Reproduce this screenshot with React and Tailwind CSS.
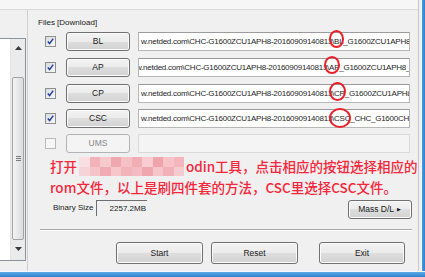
import React from 'react';

const ui = "font-['Liberation_Sans',Arial,sans-serif]";

const files = [
  {
    label: 'BL',
    mt: 'mt-0',
    pre: 'w.netded.com\\CHC-G1600ZCU1APH8-20160909140813',
    mark: '\\BL',
    post: '_G1600ZCU1APH8-20160909',
    ring: 'top-[calc(50%-12px)] h-[18px]',
    focused: true,
  },
  {
    label: 'AP',
    mt: 'mt-[7px]',
    pre: 'w.netded.com\\CHC-G1600ZCU1APH8-20160909140813',
    mark: '\\AP',
    post: '_G1600ZCU1APH8_2016090',
    ring: 'top-[calc(50%-12px)] h-[18px]',
    shift: true,
  },
  {
    label: 'CP',
    mt: 'mt-[7px]',
    pre: 'w.netded.com\\CHC-G1600ZCU1APH8-20160909140813',
    mark: '\\CP',
    post: '_G1600ZCU1APH8-2016090',
    ring: 'top-[calc(50%-12px)] h-[19px]',
  },
  {
    label: 'CSC',
    mt: 'mt-[6px]',
    pre: 'w.netded.com\\CHC-G1600ZCU1APH8-20160909140813',
    mark: '\\CSC',
    post: '_CHC_G1600CHC-2016090',
    ring: 'top-[calc(50%-11px)] h-[20px]',
  },
];

// pixelated blur over part of the annotation
const mosaic = [
  '#f8dfe1', '#f3b2b9', '#f6c9cd', '#f0a8b0', '#f5c0c6', '#f2aeb5', '#f7cdd1', '#efa3ab', '#f5c3c8', '#f3b6bc',
  '#f6d3d6', '#f5c4c9', '#f1abb2', '#f6c6cb', '#f3b3ba', '#f4bcc2', '#f0a6ae', '#f5c5ca', '#f2b1b8', '#f6cbcf',
];

const btn =
  'flex items-center justify-center rounded-[3px] border border-[#707070] bg-[linear-gradient(#f3f3f3,#ebebeb_50%,#dedede_50%,#d2d2d2)] shadow-[inset_0_0_0_1px_#fbfbfb] text-[8.5px] text-[#1b1b1b]';

const Check = ({ checked = true, disabled }) => (
  <div
    className={`flex h-[11px] w-[11px] items-center justify-center border ${
      disabled ? 'border-[#b9b9b9] bg-[#f6f6f6]' : 'border-[#8e8f8f] bg-[linear-gradient(135deg,#d9dbe0,#f8f8f8)]'
    }`}
  >
    {checked && (
      <svg width="9" height="9" viewBox="0 0 9 9">
        <path d="M1.8 4.6 L3.6 6.6 L7.2 1.6" fill="none" stroke="#233f9c" strokeWidth="1.5" />
      </svg>
    )}
  </div>
);

const FileRow = ({ f }) => (
  <div className={`flex h-[19px] items-center pl-[17px] ${f.mt}`}>
    <Check />
    <div
      className={`ml-[10px] h-[19px] w-[64px] ${btn} ${
        f.focused ? 'border-[#4aa6d8] shadow-[inset_0_0_0_1px_#b4e6f9]' : ''
      }`}
    >
      {f.label}
    </div>
    <div className="ml-[8px] flex h-[19px] w-[272px] items-center overflow-x-clip overflow-y-visible whitespace-nowrap border border-[#b7b7b7] border-t-[#9c9c9c] bg-white pl-[2px] text-[8px] tracking-[-0.25px] text-[#262626]">
      <span className={f.shift ? 'ml-[-5px]' : ''}>{f.pre}</span>
      <span className="relative">
        {f.mark}
        {/* red marker drawn over the screenshot */}
        <span className={`absolute left-[-3px] right-[-1px] rounded-[50%] border-2 border-[#e8202a] ${f.ring}`} />
      </span>
      <span>{f.post}</span>
    </div>
  </div>
);

export default function App() {
  return (
    <div className={`flex h-[277px] w-[425px] flex-col overflow-hidden bg-[#f0f0f0] ${ui}`}>
      <div className="flex min-h-0 flex-1">
        <div className="flex flex-1 flex-col">
          <div className="h-[10px] border-b border-[#dadada] bg-[#f6f6f6]" />
          <div className="flex min-h-0 flex-1">
            {/* list on the left */}
            <div className="w-[28px] border-r border-[#cfcfcf]">
              <div className="mt-[28px] flex h-[223px] w-[26px] border-y border-r border-[#8e9399] bg-white">
                <div className="ml-auto flex w-[15px] flex-col border-l border-[#e4e4e4] bg-[#ebebeb]">
                  <div className="flex h-[17px] items-center justify-center">
                    <svg width="7" height="4" viewBox="0 0 7 4">
                      <path d="M0 4 L3.5 0 L7 4 Z" fill="#3a3a3a" />
                    </svg>
                  </div>
                  <div className="h-[21px]" />
                  <div className="mx-[1px] flex h-[163px] items-center justify-center rounded-[2px] border border-[#a3a3a3] bg-[linear-gradient(90deg,#f4f4f4,#dcdcdc)]">
                    <div className="flex w-[5px] flex-col gap-[1px]">
                      <div className="h-[1px] bg-[#7a7a7a]" />
                      <div className="h-[1px] bg-[#7a7a7a]" />
                      <div className="h-[1px] bg-[#7a7a7a]" />
                    </div>
                  </div>
                  <div className="flex h-[17px] items-center justify-center">
                    <svg width="7" height="4" viewBox="0 0 7 4">
                      <path d="M0 0 L3.5 4 L7 0 Z" fill="#3a3a3a" />
                    </svg>
                  </div>
                </div>
              </div>
            </div>

            {/* main panel */}
            <div className="flex min-w-0 flex-1 flex-col">
              <div className="ml-[10px] mt-[7px] h-[11px] text-[8px] leading-[11px] text-[#1b1b1b]">Files [Download]</div>

              <div className="mt-[4px] flex flex-col">
                {files.map((f) => (
                  <FileRow key={f.label} f={f} />
                ))}
                <div className="mt-[6px] flex h-[19px] items-center pl-[17px]">
                  <Check checked={false} disabled />
                  <div className="ml-[10px] flex h-[19px] w-[64px] items-center justify-center rounded-[3px] border border-[#b0b4b7] bg-[#f4f4f4] text-[8.5px] text-[#8a8a8a]">
                    UMS
                  </div>
                  <div className="ml-[8px] h-[19px] w-[272px] border border-[#d9d9d9] bg-[#f4f4f4]" />
                </div>
              </div>

              <div className="relative z-10 mt-[3px] whitespace-nowrap pl-[22px] font-['Noto_Sans_CJK_SC',sans-serif] text-[13.5px] font-medium leading-[21px] text-[#f5263b]">
                <div className="flex items-center">
                  <span>打开</span>
                  <span className="mx-[2px] grid h-[19px] w-[105px] grid-cols-10">
                    {mosaic.map((c, i) => (
                      <span key={i} style={{ background: c }} />
                    ))}
                  </span>
                  <span>odin工具，点击相应的按钮选择相应的</span>
                </div>
                <div>rom文件，以上是刷四件套的方法，CSC里选择CSC文件。</div>
              </div>

              <div className="mt-[2px] flex h-[19px] items-start">
                <div className="ml-[25px] flex h-[16px] w-[43px] items-center text-[8px] text-[#1b1b1b]">Binary Size</div>
                <div className="flex h-[16px] w-[51px] items-center justify-end border-l border-t border-[#6e6e6e] border-b-[#fafafa] border-r-[#fafafa] pr-[1px] text-[8px] text-[#1b1b1b]">
                  2257.2MB
                </div>
                <div className={`ml-auto mr-[6px] h-[19px] w-[64px] gap-[3px] ${btn}`}>
                  <span>Mass D/L</span>
                  <span className="text-[5px]">▶</span>
                </div>
              </div>

              <div className="ml-[12px] mr-[6px] mt-[10px] h-[2px] border-b border-t border-b-white border-t-[#a9a9a9]" />

              <div className="mt-[11px] flex h-[22px]">
                <div className={`ml-[88px] w-[87px] ${btn}`}>Start</div>
                <div className={`ml-[8px] w-[87px] ${btn}`}>Reset</div>
                <div className={`ml-[21px] w-[86px] ${btn}`}>Exit</div>
              </div>
            </div>
          </div>
        </div>
        <div className="w-[7px] border-l border-[#c7c7c7]" />
        <div className="w-[7px] border-l border-[#f4f8fc] bg-[linear-gradient(90deg,#4b9be0,#2f80cf)]" />
      </div>
      <div className="h-[6px] border-t border-[#f4f8fc] bg-[linear-gradient(#5aaae8,#2d7fcf)]" />
    </div>
  );
}
